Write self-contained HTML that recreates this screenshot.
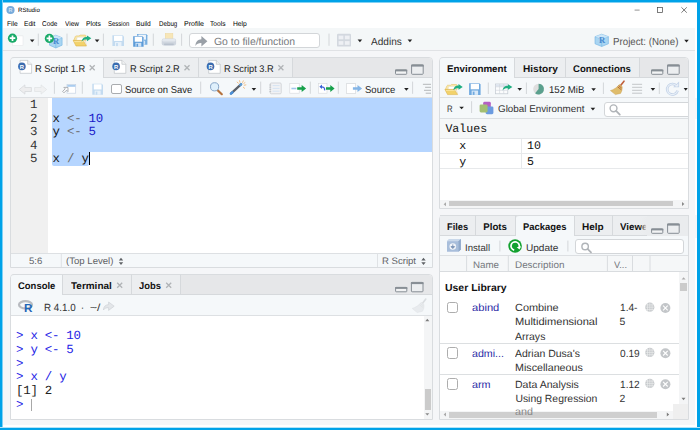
<!DOCTYPE html>
<html>
<head>
<meta charset="utf-8">
<title>RStudio</title>
<style>
html,body{margin:0;padding:0;}
body{width:700px;height:430px;overflow:hidden;background:#fff;font-family:"Liberation Sans",sans-serif;font-size:9.7px;color:#222;}
#win{position:absolute;left:0;top:0;width:700px;height:430px;background:#fff;overflow:hidden;}
.a{position:absolute;box-sizing:border-box;}
.t{position:absolute;white-space:pre;line-height:12px;height:12px;color:#222;transform-origin:0 50%;text-rendering:geometricPrecision;}
.b{font-weight:700;}
.m{font-family:"Liberation Mono",monospace;}
#ico{position:absolute;left:0;top:0;width:700px;height:430px;}
</style>
</head>
<body>
<div id="win">
<div class="a" style="left:0px;top:28.2px;width:700px;height:397px;background:#f5f6f8;"></div>
<div class="a" style="left:3px;top:28.2px;width:692px;height:21.3px;background:#f4f7f8;"></div>
<div class="a" style="left:3px;top:49.5px;width:692px;height:1px;background:#e0e2e5;"></div>
<div class="a" style="left:0px;top:0px;width:700px;height:3px;background:linear-gradient(180deg,#00a2e8 0,#00a2e8 2px,#80d1f4 2px,#80d1f4 3px);"></div>
<div class="a" style="left:0px;top:0px;width:3px;height:430px;background:linear-gradient(90deg,#00a2e8 0,#00a2e8 2px,#80d1f4 2px,#80d1f4 3px);"></div>
<div class="a" style="left:695px;top:3px;width:2px;height:425px;background:#fff;"></div>
<div class="a" style="left:3px;top:425px;width:694px;height:3px;background:#fff;"></div>
<div class="a" style="left:697px;top:0px;width:3px;height:430px;background:#00a2e8;"></div>
<div class="a" style="left:0px;top:427px;width:700px;height:1px;background:#b3e3f8;"></div>
<div class="a" style="left:0px;top:428px;width:700px;height:2px;background:#00a2e8;"></div>
<div class="a" style="left:188.5px;top:32.6px;width:131.5px;height:15.5px;background:#fff;border:1px solid #d3d6d9;border-radius:3px;"></div>
<div class="a" style="left:10px;top:57px;width:423px;height:211px;background:#fff;border:1px solid #d9dcdf;border-radius:4px 4px 0 0;"></div>
<div class="a" style="left:11px;top:58px;width:421px;height:19px;background:#e6e7e9;border-radius:3px 3px 0 0;"></div>
<div class="a" style="left:11px;top:77px;width:421px;height:1px;background:#d6d9dc;"></div>
<div class="a" style="left:104px;top:57px;width:95px;height:21px;background:#eceef0;border-top:1px solid #d9dcdf;border-right:1px solid #d6d9dc;border-bottom:1px solid #d6d9dc;"></div>
<div class="a" style="left:199px;top:57px;width:94px;height:21px;background:#eceef0;border-top:1px solid #d9dcdf;border-right:1px solid #d6d9dc;border-bottom:1px solid #d6d9dc;"></div>
<div class="a" style="left:11px;top:57px;width:93px;height:21px;background:#f5f8fa;border-top:1px solid #d9dcdf;border-right:1px solid #d6d9dc;border-radius:3px 0 0 0;"></div>
<div class="a" style="left:11px;top:78px;width:421px;height:20px;background:#f5f8fa;border-bottom:1px solid #dde0e3;"></div>
<div class="a" style="left:11px;top:98px;width:37px;height:154.5px;background:#f0f0f0;"></div>
<div class="a" style="left:52px;top:98px;width:380px;height:54px;background:#b5d5ff;"></div>
<div class="a" style="left:52px;top:152px;width:37.2px;height:14px;background:#b5d5ff;border-radius:0 0 2px 2px;"></div>
<div class="a" style="left:88.7px;top:152px;width:1.1px;height:13.4px;background:#000;"></div>
<div class="a" style="left:11px;top:252.5px;width:421px;height:14.5px;background:#f5f8fa;border-top:1px solid #dde0e3;"></div>
<div class="a" style="left:111.4px;top:83.7px;width:10.7px;height:10.7px;background:#fff;border:1px solid #a9acaf;border-radius:2px;"></div>
<div class="a" style="left:10px;top:274px;width:423px;height:146px;background:#fff;border:1px solid #d9dcdf;border-radius:4px 4px 0 0;"></div>
<div class="a" style="left:11px;top:275px;width:421px;height:19px;background:#e6e7e9;border-radius:3px 3px 0 0;"></div>
<div class="a" style="left:11px;top:294px;width:421px;height:1px;background:#d6d9dc;"></div>
<div class="a" style="left:63px;top:274px;width:68.5px;height:21px;background:#eceef0;border-top:1px solid #d9dcdf;border-right:1px solid #d6d9dc;border-bottom:1px solid #d6d9dc;"></div>
<div class="a" style="left:131.5px;top:274px;width:49.5px;height:21px;background:#eceef0;border-top:1px solid #d9dcdf;border-right:1px solid #d6d9dc;border-bottom:1px solid #d6d9dc;"></div>
<div class="a" style="left:11px;top:274px;width:52px;height:21px;background:#f5f8fa;border-top:1px solid #d9dcdf;border-right:1px solid #d6d9dc;border-radius:3px 0 0 0;"></div>
<div class="a" style="left:11px;top:295px;width:421px;height:20.5px;background:#f5f8fa;border-bottom:1px solid #dde0e3;"></div>
<div class="a" style="left:31.3px;top:398.8px;width:1px;height:12.4px;background:#a8a8a8;"></div>
<div class="a" style="left:424px;top:316px;width:8px;height:103px;background:#f4f5f6;"></div>
<div class="a" style="left:424.8px;top:389px;width:6.4px;height:21px;background:#cbcbcb;"></div>
<div class="a" style="left:439px;top:57px;width:250px;height:152px;background:#fff;border:1px solid #d9dcdf;border-radius:4px 4px 0 0;"></div>
<div class="a" style="left:440px;top:58px;width:248px;height:19px;background:#e6e7e9;border-radius:3px 3px 0 0;"></div>
<div class="a" style="left:440px;top:77px;width:248px;height:1px;background:#d6d9dc;"></div>
<div class="a" style="left:515px;top:57px;width:50.5px;height:21px;background:#eceef0;border-top:1px solid #d9dcdf;border-right:1px solid #d6d9dc;border-bottom:1px solid #d6d9dc;"></div>
<div class="a" style="left:565.5px;top:57px;width:74px;height:21px;background:#eceef0;border-top:1px solid #d9dcdf;border-right:1px solid #d6d9dc;border-bottom:1px solid #d6d9dc;"></div>
<div class="a" style="left:440px;top:57px;width:75px;height:21px;background:#f5f8fa;border-top:1px solid #d9dcdf;border-right:1px solid #d6d9dc;border-radius:3px 0 0 0;"></div>
<div class="a" style="left:440px;top:78px;width:248px;height:19.5px;background:#f5f8fa;border-bottom:1px solid #dde0e3;"></div>
<div class="a" style="left:440px;top:97.5px;width:248px;height:21px;background:#f5f8fa;border-bottom:1px solid #dde0e3;"></div>
<div class="a" style="left:603.6px;top:101.7px;width:90px;height:15.8px;background:#fff;border:1px solid #d3d6d9;border-radius:3px;"></div>
<div class="a" style="left:689px;top:98px;width:8px;height:21px;background:#f5f6f8;"></div>
<div class="a" style="left:688px;top:98px;width:1px;height:21px;background:#d9dcdf;"></div>
<div class="a" style="left:440px;top:119px;width:248px;height:20px;background:#f5f7f8;border-bottom:1px solid #e4e6e8;"></div>
<div class="a" style="left:440px;top:153px;width:248px;height:1px;background:#e7e9eb;"></div>
<div class="a" style="left:440px;top:168px;width:248px;height:1px;background:#e7e9eb;"></div>
<div class="a" style="left:521px;top:139px;width:1px;height:29px;background:#e7e9eb;"></div>
<div class="a" style="left:440px;top:200px;width:248px;height:8px;background:#f4f5f6;"></div>
<div class="a" style="left:449px;top:201px;width:224px;height:5.4px;background:#cbcbcb;"></div>
<div class="a" style="left:439px;top:215px;width:250px;height:205px;background:#fff;border:1px solid #d9dcdf;border-radius:4px 4px 0 0;"></div>
<div class="a" style="left:440px;top:216px;width:248px;height:19px;background:#e6e7e9;border-radius:3px 3px 0 0;"></div>
<div class="a" style="left:440px;top:235px;width:248px;height:1px;background:#d6d9dc;"></div>
<div class="a" style="left:440px;top:215px;width:36px;height:21px;background:#eceef0;border-top:1px solid #d9dcdf;border-right:1px solid #d6d9dc;border-bottom:1px solid #d6d9dc;"></div>
<div class="a" style="left:476px;top:215px;width:40px;height:21px;background:#eceef0;border-top:1px solid #d9dcdf;border-right:1px solid #d6d9dc;border-bottom:1px solid #d6d9dc;"></div>
<div class="a" style="left:574.5px;top:215px;width:38px;height:21px;background:#eceef0;border-top:1px solid #d9dcdf;border-right:1px solid #d6d9dc;border-bottom:1px solid #d6d9dc;"></div>
<div class="a" style="left:612.5px;top:215px;width:77.5px;height:21px;background:#eceef0;border-top:1px solid #d9dcdf;border-right:1px solid #d6d9dc;border-bottom:1px solid #d6d9dc;"></div>
<div class="a" style="left:516px;top:215px;width:58.5px;height:21px;background:#f5f8fa;border-top:1px solid #d9dcdf;border-right:1px solid #d6d9dc;border-radius:3px 0 0 0;"></div>
<div class="a" style="left:647px;top:216px;width:41px;height:19.5px;background:#eaecee;"></div>
<div class="a" style="left:688px;top:216px;width:1px;height:21px;background:#d9dcdf;"></div>
<div class="a" style="left:689px;top:215px;width:8px;height:23px;background:#f5f6f8;"></div>
<div class="a" style="left:440px;top:236px;width:248px;height:19.5px;background:#f5f8fa;border-bottom:1px solid #dde0e3;"></div>
<div class="a" style="left:574.7px;top:239px;width:109.5px;height:14.5px;background:#fff;border:1px solid #d3d6d9;border-radius:3px;"></div>
<div class="a" style="left:440px;top:255.5px;width:248px;height:16px;background:#f5f7f8;border-bottom:1px solid #d9dcdf;"></div>
<div class="a" style="left:446.5px;top:302px;width:11.4px;height:11.4px;background:#fff;border:1px solid #adadad;border-radius:2.5px;"></div>
<div class="a" style="left:446.5px;top:347.3px;width:11.4px;height:11.4px;background:#fff;border:1px solid #adadad;border-radius:2.5px;"></div>
<div class="a" style="left:446.5px;top:378.3px;width:11.4px;height:11.4px;background:#fff;border:1px solid #adadad;border-radius:2.5px;"></div>
<div class="a" style="left:440px;top:343px;width:239px;height:1px;background:#dcdfe1;"></div>
<div class="a" style="left:440px;top:374px;width:239px;height:1px;background:#dcdfe1;"></div>
<div class="a" style="left:679px;top:272px;width:8.5px;height:132px;background:#f4f5f6;"></div>
<div class="a" style="left:680.4px;top:283px;width:6.4px;height:8.3px;background:#cbcbcb;"></div>
<div class="a" style="left:440px;top:410.8px;width:233px;height:8.2px;background:#f4f5f6;"></div>
<div class="a" style="left:673px;top:403.8px;width:15px;height:15.2px;background:#efefef;"></div>
<div class="a" style="left:449px;top:412px;width:208px;height:5.8px;background:#cbcbcb;opacity:.93;"></div>
<svg id="ico" width="700" height="430" viewBox="0 0 700 430">
<circle cx="10.5" cy="10" r="4.1" fill="#75aadb"/>
<text x="10.5" y="11.9" font-family="Liberation Sans,sans-serif" font-size="5.4" font-weight="700" fill="#cfe2f4" text-anchor="middle">R</text>
<path d="M634.6 10.1h5" stroke="#666" stroke-width=".7"/>
<rect x="657.4" y="7.5" width="5" height="5" fill="none" stroke="#444" stroke-width=".7"/>
<path d="M681.4 7.3l5.4 5.4M686.8 7.3l-5.4 5.4" stroke="#444" stroke-width=".7"/>
<path d="M38.3 33.6V45.8" stroke="#d3d6d9" stroke-width="1"/>
<path d="M67 33.6V45.8" stroke="#d3d6d9" stroke-width="1"/>
<path d="M103.4 33.6V45.8" stroke="#d3d6d9" stroke-width="1"/>
<path d="M153.3 33.6V45.8" stroke="#d3d6d9" stroke-width="1"/>
<path d="M181.6 33.6V45.8" stroke="#d3d6d9" stroke-width="1"/>
<path d="M329 33.6V45.8" stroke="#d3d6d9" stroke-width="1"/>
<path d="M29.90 39.60h4.6l-2.3 2.6z" fill="#222"/>
<path d="M94.80 39.60h4.6l-2.3 2.6z" fill="#222"/>
<path d="M357.60 39.60h4.6l-2.3 2.6z" fill="#222"/>
<path d="M407.60 39.60h4.6l-2.3 2.6z" fill="#222"/>
<path d="M684.20 39.80h4.6l-2.3 2.6z" fill="#222"/>
<path d="M61.3 253.5V267" stroke="#dfe2e5" stroke-width="1"/>
<path d="M377.5 253.5V267" stroke="#dfe2e5" stroke-width="1"/>
<path d="M118.8 260.40000000000003h4.4l-2.2 -2.7zM118.8 262.2h4.4l-2.2 2.7z" fill="#5f6266"/>
<path d="M421.3 260.40000000000003h4.4l-2.2 -2.7zM421.3 262.2h4.4l-2.2 2.7z" fill="#5f6266"/>
<path d="M89.7 65.3l5.0 5.0M94.7 65.3l-5.0 5.0" stroke="#b0b3b6" stroke-width="1.3" fill="none"/>
<path d="M184.5 65.3l5.0 5.0M189.5 65.3l-5.0 5.0" stroke="#b0b3b6" stroke-width="1.3" fill="none"/>
<path d="M278.4 65.3l5.0 5.0M283.4 65.3l-5.0 5.0" stroke="#b0b3b6" stroke-width="1.3" fill="none"/>
<path d="M54.4 81.6V93.8" stroke="#d3d6d9" stroke-width="1"/>
<path d="M82.3 81.6V93.8" stroke="#d3d6d9" stroke-width="1"/>
<path d="M200.7 81.6V93.8" stroke="#d3d6d9" stroke-width="1"/>
<path d="M260.7 81.6V93.8" stroke="#d3d6d9" stroke-width="1"/>
<path d="M310.3 81.6V93.8" stroke="#d3d6d9" stroke-width="1"/>
<path d="M338.3 81.6V93.8" stroke="#d3d6d9" stroke-width="1"/>
<path d="M412.6 81.6V93.8" stroke="#d3d6d9" stroke-width="1"/>
<path d="M251.60 88.10h4.6l-2.3 2.6z" fill="#222"/>
<path d="M404.10 88.10h4.6l-2.3 2.6z" fill="#222"/>
<path d="M117.2 282.7l5.0 5.0M122.2 282.7l-5.0 5.0" stroke="#b0b3b6" stroke-width="1.3" fill="none"/>
<path d="M166.2 282.7l5.0 5.0M171.2 282.7l-5.0 5.0" stroke="#b0b3b6" stroke-width="1.3" fill="none"/>
<path d="M425.3 321.2h4l-2-2.4z" fill="#7c7c7c"/><path d="M425.3 413.2h4l-2 2.4z" fill="#8a8a8a"/>
<path d="M488.3 82.5V94" stroke="#d3d6d9" stroke-width="1"/>
<path d="M526.4 82.5V94" stroke="#d3d6d9" stroke-width="1"/>
<path d="M603.4 82.5V94" stroke="#d3d6d9" stroke-width="1"/>
<path d="M659.3 82.5V94" stroke="#d3d6d9" stroke-width="1"/>
<path d="M517.40 88.10h4.6l-2.3 2.6z" fill="#222"/>
<path d="M591.30 88.30h4.6l-2.3 2.6z" fill="#222"/>
<path d="M650.60 88.10h4.6l-2.3 2.6z" fill="#222"/>
<path d="M683.70 88.10h4l-2.0 2.6z" fill="#222"/>
<path d="M459.30 106.70h4.6l-2.3 2.6z" fill="#222"/>
<path d="M471.6 101.2V113" stroke="#d3d6d9" stroke-width="1"/>
<path d="M590.60 107.80h4.6l-2.3 2.6z" fill="#222"/>
<path d="M446 202.2v4l-2.4-2z" fill="#aaa"/><path d="M682 202v4l2.4-2z" fill="#8a8a8a"/>
<path d="M499.9 240.6V251.5" stroke="#d3d6d9" stroke-width="1"/>
<path d="M567.9 240.6V251.5" stroke="#d3d6d9" stroke-width="1"/>
<path d="M466.6 255.5V271" stroke="#d9dcdf" stroke-width="1"/>
<path d="M508.3 255.5V271" stroke="#d9dcdf" stroke-width="1"/>
<path d="M607.4 255.5V271" stroke="#d9dcdf" stroke-width="1"/>
<path d="M632.5 255.5V271" stroke="#d9dcdf" stroke-width="1"/>
<path d="M650 255.5V271" stroke="#d9dcdf" stroke-width="1"/>
<circle cx="649.8" cy="307.2" r="4.6" fill="#c6c9cc"/><path d="M645.1999999999999 307.2h9.2M649.8 302.59999999999997v9.2M645.8 304.9h8M645.8 309.5h8M647.5 303.2v8M652.0999999999999 303.2v8" stroke="#eceeef" stroke-width=".6" fill="none"/>
<circle cx="665.4" cy="308.0" r="5" fill="#c3c6c9"/><path d="M663.1 305.7l4.6 4.6M667.6999999999999 305.7l-4.6 4.6" stroke="#fff" stroke-width="1.1"/>
<circle cx="649.8" cy="352.4" r="4.6" fill="#c6c9cc"/><path d="M645.1999999999999 352.4h9.2M649.8 347.79999999999995v9.2M645.8 350.09999999999997h8M645.8 354.7h8M647.5 348.4v8M652.0999999999999 348.4v8" stroke="#eceeef" stroke-width=".6" fill="none"/>
<circle cx="665.4" cy="353.2" r="5" fill="#c3c6c9"/><path d="M663.1 350.9l4.6 4.6M667.6999999999999 350.9l-4.6 4.6" stroke="#fff" stroke-width="1.1"/>
<circle cx="649.8" cy="383.4" r="4.6" fill="#c6c9cc"/><path d="M645.1999999999999 383.4h9.2M649.8 378.79999999999995v9.2M645.8 381.09999999999997h8M645.8 385.7h8M647.5 379.4v8M652.0999999999999 379.4v8" stroke="#eceeef" stroke-width=".6" fill="none"/>
<circle cx="665.4" cy="384.2" r="5" fill="#c3c6c9"/><path d="M663.1 381.9l4.6 4.6M667.6999999999999 381.9l-4.6 4.6" stroke="#fff" stroke-width="1.1"/>
<path d="M681.6 279.6h4l-2-2.4z" fill="#aaa"/><path d="M681.5 397.8h4l-2 2.4z" fill="#7c7c7c"/>
<path d="M446 412.5v4l-2.4-2z" fill="#aaa"/><path d="M666.8 412.5v4l2.4-2z" fill="#7c7c7c"/>
<rect x="12.3" y="35.9" width="10.7" height="9.8" fill="#fff" stroke="#e0e2e5" stroke-width=".5"/>
<circle cx="12.5" cy="38.2" r="4.6" fill="#18aa68"/><path d="M9.7 38.2h5.6M12.5 35.400000000000006v5.6" stroke="#fff" stroke-width="1.7"/>
<path d="M55.8 35.2L62.1 37.760000000000005V45.184000000000005L55.8 48.0L49.5 45.184000000000005V37.760000000000005z" fill="#a9d5f2" stroke="#6fb2e2" stroke-width=".6"/><path d="M49.5 37.760000000000005L55.8 40.32000000000001L62.1 37.760000000000005M55.8 40.32000000000001V48.0" stroke="#6fb2e2" stroke-width=".5" fill="none"/><path d="M55.8 35.2L62.1 37.760000000000005L55.8 40.32000000000001L49.5 37.760000000000005z" fill="#d3eafa" opacity=".8"/><text x="56.099999999999994" y="44.416000000000004" font-family="Liberation Serif,serif" font-size="8.4" font-weight="700" fill="#4a8bd0" text-anchor="middle">R</text>
<circle cx="49.4" cy="38.4" r="4.6" fill="#18aa68"/><path d="M46.6 38.4h5.6M49.4 35.6v5.6" stroke="#fff" stroke-width="1.7"/>
<g transform="translate(73.2 35) scale(1.000 1.000)"><path d="M0.4 5.6L2.2 1.4Q2.5 .9 3.1 .9H5.9L6.8 .1H11.9Q12.6 .1 12.6 .8V5.6z" fill="#f8e7ab" stroke="#e3bd57" stroke-width=".55"/><path d="M3.2 5.6L4.2 2.3H11.2V5.6z" fill="#fff" stroke="#d4d4d4" stroke-width=".35"/><path d="M0 5.4H9.9L13.3 11H2.8z" fill="#f2d26b" stroke="#dcae3c" stroke-width=".55" stroke-linejoin="round"/><path d="M1 6.6H10.3" stroke="#f9e6a4" stroke-width=".9"/><path d="M11 2.6L13.4 10.6" stroke="#e8cf9a" stroke-width=".5"/></g>
<path d="M81.6 41.8C82.1 38.099999999999994 84.1 37.0 86.935 37.0V35.4L91.3 38.3L86.935 41.199999999999996V39.599999999999994C84.6 39.5 83.1 39.8 81.6 41.8z" fill="#1fae80"/>
<g opacity="1"><path d="M112.4 35.2h10.4l1.2 1.2v9.700000000000001h-11.6z" fill="#c3dbf0"/><rect x="114.024" y="35.800000000000004" width="8.352" height="5.123" fill="#fff"/><rect x="114.95200000000001" y="42.067" width="6.496" height="4.033" fill="#e9f2fa"/><rect x="116.11200000000001" y="43.048" width="1.74" height="3.0520000000000005" fill="#c3dbf0"/></g>
<g opacity="1"><path d="M137 34h9.200000000000001l1.2 1.2v9.5h-10.4z" fill="#78afe0"/><rect x="138.456" y="34.6" width="7.4879999999999995" height="5.028999999999999" fill="#eef5fc"/><rect x="139.288" y="40.741" width="5.824000000000001" height="3.9589999999999996" fill="#cfe3f6"/><rect x="140.328" y="41.704" width="1.56" height="2.996" fill="#78afe0"/></g>
<rect x="132.8" y="35.8" width="11.2" height="11.2" fill="#f4f5f7"/>
<g opacity="1"><path d="M133.2 36.2h9.200000000000001l1.2 1.2v9.3h-10.4z" fill="#5b9bd8"/><rect x="134.65599999999998" y="36.800000000000004" width="7.4879999999999995" height="4.935" fill="#fff"/><rect x="135.488" y="42.815000000000005" width="5.824000000000001" height="3.885" fill="#cfe3f6"/><rect x="136.528" y="43.760000000000005" width="1.56" height="2.9400000000000004" fill="#5b9bd8"/></g>
<rect x="165.2" y="33.4" width="7.7" height="6.6" fill="#f7e6b8" stroke="#ecd395" stroke-width=".4"/><rect x="161.7" y="38.6" width="14.4" height="7" rx="2" fill="#cfd6df"/><rect x="162.3" y="38.9" width="13.2" height="2.6" rx="1.2" fill="#e3e8ee"/><rect x="164" y="43.6" width="9.8" height="1.6" rx=".6" fill="#b9c2ce"/>
<path d="M195.4 46c0.2 -4.6 2.6 -6.6 6 -6.8v-3.2l6 5.2l-6 5.2v-3.3c-2.6 -0.1 -4.6 0.6 -6 2.9z" fill="#9aa0a7"/>
<rect x="337" y="33.8" width="14" height="12.8" rx="1.2" fill="#d3d8df"/><rect x="338.6" y="35.6" width="4.8" height="3.7" fill="#eef0f4"/><rect x="344.8" y="35.6" width="4.8" height="3.7" fill="#eef0f4"/><rect x="338.6" y="41.1" width="4.8" height="3.7" fill="#eef0f4"/><rect x="344.8" y="41.1" width="4.8" height="3.7" fill="#eef0f4"/>
<path d="M601.7 34.2L608.4 36.660000000000004V43.794000000000004L601.7 46.5L595 43.794000000000004V36.660000000000004z" fill="#a9d5f2" stroke="#6fb2e2" stroke-width=".6"/><path d="M595 36.660000000000004L601.7 39.120000000000005L608.4 36.660000000000004M601.7 39.120000000000005V46.5" stroke="#6fb2e2" stroke-width=".5" fill="none"/><path d="M601.7 34.2L608.4 36.660000000000004L601.7 39.120000000000005L595 36.660000000000004z" fill="#d3eafa" opacity=".8"/><text x="602.0" y="43.056000000000004" font-family="Liberation Serif,serif" font-size="8.6" font-weight="700" fill="#4a8bd0" text-anchor="middle">R</text>
<path d="M20.1 60.4h7.6l3.9 3.9v9h-11.5z" fill="#fff" stroke="#b4b8bd" stroke-width=".6"/><path d="M27.700000000000003 60.4v3.9h3.9" fill="#f1f2f3" stroke="#b4b8bd" stroke-width=".6"/><circle cx="21.900000000000002" cy="66.4" r="3.8" fill="#3b6cb0"/><text x="21.900000000000002" y="68.5" font-family="Liberation Sans,sans-serif" font-size="5.8" font-weight="700" fill="#fff" text-anchor="middle">R</text>
<path d="M114.3 60.4h7.6l3.9 3.9v9h-11.5z" fill="#fff" stroke="#b4b8bd" stroke-width=".6"/><path d="M121.89999999999999 60.4v3.9h3.9" fill="#f1f2f3" stroke="#b4b8bd" stroke-width=".6"/><circle cx="116.1" cy="66.4" r="3.8" fill="#3b6cb0"/><text x="116.1" y="68.5" font-family="Liberation Sans,sans-serif" font-size="5.8" font-weight="700" fill="#fff" text-anchor="middle">R</text>
<path d="M208.7 60.4h7.6l3.9 3.9v9h-11.5z" fill="#fff" stroke="#b4b8bd" stroke-width=".6"/><path d="M216.29999999999998 60.4v3.9h3.9" fill="#f1f2f3" stroke="#b4b8bd" stroke-width=".6"/><circle cx="210.5" cy="66.4" r="3.8" fill="#3b6cb0"/><text x="210.5" y="68.5" font-family="Liberation Sans,sans-serif" font-size="5.8" font-weight="700" fill="#fff" text-anchor="middle">R</text>
<rect x="395.5" y="69.89999999999999" width="11.2" height="4.4" rx=".6" fill="#f2f3f4" stroke="#878e95" stroke-width="1"/><path d="M395 70.5h12.2" stroke="#878e95" stroke-width="1.8"/>
<rect x="411.6" y="64.89999999999999" width="11.6" height="9.4" rx=".8" fill="#eceef0" stroke="#878e95" stroke-width="1"/><path d="M411.1 65.6h12.6" stroke="#878e95" stroke-width="2"/>
<path d="M19.3 89.5l5.6 -4.6v2.6h6.5v4h-6.5v2.6z" fill="#ededee" stroke="#d3d5d8" stroke-width=".7" stroke-linejoin="round"/>
<path d="M46.7 89.5l-5.6 -4.6v2.6h-6.5v4h6.5v2.6z" fill="#f0f1f2" stroke="#e0e2e4" stroke-width=".7" stroke-linejoin="round"/>
<rect x="67" y="84.6" width="8.7" height="8.6" fill="#fff" stroke="#c6d3e3" stroke-width=".7"/><rect x="67.3" y="84.9" width="8.1" height="1.9" fill="#aacdf0"/><path d="M62.6 91.4l2.6 -2.6l-1.4 -1.4h4.2v4.2l-1.4 -1.4l-2.6 2.6z" fill="#fbfbfc" stroke="#90959b" stroke-width=".7" stroke-linejoin="round"/>
<g opacity="1"><path d="M92.3 83.7h9.5l1.2 1.2v9.8h-10.7z" fill="#c3dbf0"/><rect x="93.798" y="84.3" width="7.703999999999999" height="5.17" fill="#fff"/><rect x="94.654" y="90.63" width="5.992" height="4.07" fill="#e9f2fa"/><rect x="95.724" y="91.62" width="1.6049999999999998" height="3.08" fill="#c3dbf0"/></g>
<path d="M217.4 90l4.4 4.2" stroke="#b5723d" stroke-width="2.2" stroke-linecap="round"/><circle cx="214.6" cy="86.8" r="4.1" fill="#dff0fc" stroke="#86a5c8" stroke-width="1"/>
<path d="M231.2 93.4L241 84.4" stroke="#5b6068" stroke-width="2.3" stroke-linecap="round"/><path d="M230.9 93.7l1.5 -1.4" stroke="#4a90d9" stroke-width="2.5" stroke-linecap="round"/><path d="M240.3 85l.9 -.8" stroke="#5b9bd5" stroke-width="2.4" stroke-linecap="round"/><path d="M237.1 82.1l1.3 1.1M239.5 80.7l.5 1.6M243.3 80.8l-.7 1.6M244.2 85.2l1.7 -.3M243.3 87.2l1.3 1.1M245 82.6l-1.2 .8" stroke="#f0b878" stroke-width=".9" stroke-linecap="round"/>
<rect x="270.2" y="83" width="11" height="10.8" rx="1" fill="#f1f2f4" stroke="#c6c9cd" stroke-width=".7"/><path d="M272.6 85.6h7M272.6 88.4h7M272.6 91.2h7" stroke="#d5e4f3" stroke-width="1"/><path d="M269.4 85h1.8M269.4 87.2h1.8M269.4 89.4h1.8M269.4 91.6h1.8" stroke="#b0b4b9" stroke-width=".7"/>
<rect x="289.8" y="83.4" width="9.4" height="9.8" fill="#fff" stroke="#d5d8db" stroke-width=".6"/><path d="M291.4 88.5h5" stroke="#a2c7ec" stroke-width="1.6"/>
<path d="M297.2 87.2H301.65V85.05L306.1 88.5L301.65 91.95V89.8H297.2z" fill="#16a04a"/>
<rect x="318.4" y="83.4" width="8.6" height="9.8" fill="#fff" stroke="#d5d8db" stroke-width=".6"/><path d="M324.6 90.4c0.4 -2.6 -1 -3.6 -3.2 -3.6" stroke="#3a60d8" stroke-width="1.3" fill="none"/><path d="M322 84.6v4.4l-2.6 -2.2z" fill="#3a60d8"/>
<path d="M326 87.2H330.3V85.05L334.6 88.5L330.3 91.95V89.8H326z" fill="#16a04a"/>
<rect x="346.5" y="83.7" width="9.2" height="9.8" fill="#fff" stroke="#d0d3d6" stroke-width=".6"/>
<path d="M352.9 87.2H357.5V85.0L362.1 88.5L357.5 92.0V89.8H352.9z" fill="#84b5e6"/>
<path d="M422.9 84.3H431M425.09999999999997 87.3H431M424.0 90.3H431M425.7 93.2H431" stroke="#b4b7ba" stroke-width="1" fill="none"/>
<rect x="395.6" y="287.40000000000003" width="11.2" height="4.4" rx=".6" fill="#f2f3f4" stroke="#878e95" stroke-width="1"/><path d="M395.1 288.0h12.2" stroke="#878e95" stroke-width="1.8"/>
<rect x="411.4" y="282.40000000000003" width="11.6" height="9.4" rx=".8" fill="#eceef0" stroke="#878e95" stroke-width="1"/><path d="M410.9 283.1h12.6" stroke="#878e95" stroke-width="2"/>
<ellipse cx="25.5" cy="304.8" rx="6.5" ry="3.6" fill="none" stroke="#b8bbc0" stroke-width="2.2"/><text x="28.2" y="311.5" font-family="Liberation Sans,sans-serif" font-size="11.7" font-weight="700" fill="#1f65b7" text-anchor="middle">R</text>
<path d="M103.4 310c0.2 -3.6 2.2 -5.2 5.2 -5.4v-2.6l5.6 4.2l-5.6 4.2v-2.7c-2.2 -0.1 -4 0.5 -5.2 2.3z" fill="#e3e6e9" stroke="#c9cdd1" stroke-width=".6"/>
<g opacity="0.6" transform="translate(412.5 298.6)"><path d="M13.3 0.5L9.9 4.9" stroke="#c9cdd1" stroke-width="1.6" stroke-linecap="round"/><path d="M8.7 3.7L11.5 5.9C11.7 8.8 10.9 11.3 9.9 12.7L4.7 13.9L-0.3 9.9C2.9 8.9 6.7 6.7 8.7 3.7z" fill="#e1e4e7" stroke="#c9cdd1" stroke-width=".4"/><path d="M7.9 4.9l3 2.4M6.9 6.1l3.8 3" stroke="#d2d5d8" stroke-width=".8"/></g>
<rect x="651.6" y="69.89999999999999" width="11.2" height="4.4" rx=".6" fill="#f2f3f4" stroke="#878e95" stroke-width="1"/><path d="M651.1 70.5h12.2" stroke="#878e95" stroke-width="1.8"/>
<rect x="667.6" y="64.89999999999999" width="11.6" height="9.4" rx=".8" fill="#eceef0" stroke="#878e95" stroke-width="1"/><path d="M667.1 65.6h12.6" stroke="#878e95" stroke-width="2"/>
<g transform="translate(444.9 84.4) scale(0.956 0.927)"><path d="M0.4 5.6L2.2 1.4Q2.5 .9 3.1 .9H5.9L6.8 .1H11.9Q12.6 .1 12.6 .8V5.6z" fill="#f8e7ab" stroke="#e3bd57" stroke-width=".55"/><path d="M3.2 5.6L4.2 2.3H11.2V5.6z" fill="#fff" stroke="#d4d4d4" stroke-width=".35"/><path d="M0 5.4H9.9L13.3 11H2.8z" fill="#f2d26b" stroke="#dcae3c" stroke-width=".55" stroke-linejoin="round"/><path d="M1 6.6H10.3" stroke="#f9e6a4" stroke-width=".9"/><path d="M11 2.6L13.4 10.6" stroke="#e8cf9a" stroke-width=".5"/></g>
<path d="M453.4 90.3C453.9 86.7 455.9 85.60000000000001 458.515 85.60000000000001V84.10000000000001L462.7 86.9L458.515 89.7V88.2C456.4 88.10000000000001 454.9 88.4 453.4 90.3z" fill="#1fae80"/>
<g opacity="1"><path d="M469.1 83.2h10.3l1.2 1.2v10.5h-11.5z" fill="#70a9df"/><rect x="470.71000000000004" y="83.8" width="8.28" height="5.499" fill="#fff"/><rect x="471.63" y="90.571" width="6.44" height="4.329" fill="#d9e9f8"/><rect x="472.78000000000003" y="91.624" width="1.7249999999999999" height="3.2760000000000002" fill="#70a9df"/></g>
<rect x="495.6" y="84" width="12.2" height="9.8" fill="#fbfcfd" stroke="#c2c8d0" stroke-width=".7"/><rect x="496" y="84.4" width="11.4" height="2.2" fill="#dde5f0"/><path d="M495.6 86.8h12.2M495.6 90.3h12.2M499.6 84v9.8M503.7 84v9.8" stroke="#cfd4da" stroke-width=".6"/>
<path d="M502.6 90.39999999999999C503.1 86.8 505.1 85.7 507.99 85.7V84.2L512.4 87L507.99 89.8V88.3C505.6 88.2 504.1 88.5 502.6 90.39999999999999z" fill="#1fae80"/>
<circle cx="538.6" cy="89.1" r="5.4" fill="#dedede"/><path d="M538.6 89.1V83.7A5.4 5.4 0 1 1 535.1 93.2z" fill="#5aa08e"/>
<g opacity="1" transform="translate(610.7 80.7)"><path d="M13.3 0.5L9.9 4.9" stroke="#c0603c" stroke-width="1.6" stroke-linecap="round"/><path d="M8.7 3.7L11.5 5.9C11.7 8.8 10.9 11.3 9.9 12.7L4.7 13.9L-0.3 9.9C2.9 8.9 6.7 6.7 8.7 3.7z" fill="#e0bd6c" stroke="#c49a4a" stroke-width=".4"/><path d="M7.9 4.9l3 2.4M6.9 6.1l3.8 3" stroke="#a8552e" stroke-width=".8"/></g>
<path d="M632.1 84.3H642.1M632.1 87.3H642.1M632.1 90.3H642.1M632.1 93.2H642.1" stroke="#c3c6c9" stroke-width="1" fill="none"/>
<path d="M676.8 86.2A5.3 5.3 0 1 0 677.6 90.6" fill="none" stroke="#c3d2e7" stroke-width="2.6"/><path d="M679.1 81.4v5.9h-5.9z" fill="#c3d2e7"/><path d="M676.8 86.2A5.3 5.3 0 1 0 677.6 90.6" fill="none" stroke="#e9f0f8" stroke-width="1.1"/><path d="M678.3 83.3v3.2h-3.2z" fill="#e9f0f8"/>
<rect x="483.2" y="101.8" width="7.6" height="7.6" rx="1.4" fill="#b45fc4"/><rect x="485.6" y="106.4" width="7.8" height="7.8" rx="1.4" fill="#6b9be0"/><rect x="479.6" y="104.4" width="8" height="8" rx="1.4" fill="#a3bf72"/>
<circle cx="613.532" cy="108.33200000000001" r="3.4320000000000004" fill="none" stroke="#b0b4b8" stroke-width="1.4"/><path d="M616.106 110.906L619.8 114.60000000000001" stroke="#b0b4b8" stroke-width="1.7999999999999998" stroke-linecap="round"/>
<rect x="651.6" y="228.9" width="11.2" height="4.4" rx=".6" fill="#f2f3f4" stroke="#878e95" stroke-width="1"/><path d="M651.1 229.5h12.2" stroke="#878e95" stroke-width="1.8"/>
<rect x="667.6" y="223.9" width="11.6" height="9.4" rx=".8" fill="#eceef0" stroke="#878e95" stroke-width="1"/><path d="M667.1 224.60000000000002h12.6" stroke="#878e95" stroke-width="2"/>
<path d="M447 241.2l2.2 -2.2h11.6v10.6l-2.2 2.2h-11.6z" fill="#a8bedb"/><path d="M447 241.2l2.2 -2.2h11.6l-2.2 2.2z" fill="#c9d8ea"/><path d="M458.6 241.2l2.2 -2.2v10.6l-2.2 2.2z" fill="#8ea8ca"/><circle cx="452.8" cy="246.5" r="3.3" fill="#f2f5f9"/><path d="M452.8 244.4v2.6M451 246.6l1.8 1.9l1.8 -1.9z" stroke="#7a93b6" stroke-width=".9" fill="#7a93b6"/>
<circle cx="515.1" cy="246" r="6.8" fill="#12a12f"/><path d="M519.2 247.2A4.2 4.2 0 1 0 514.2 250.1" fill="none" stroke="#fff" stroke-width="1.7"/><path d="M521.2 246.2l-1.7 3.4l-2.8 -2.4z" fill="#fff"/>
<circle cx="585.1340000000001" cy="246.534" r="3.2340000000000004" fill="none" stroke="#b0b4b8" stroke-width="1.4"/><path d="M587.5595000000002 248.9595L591.0 252.4" stroke="#b0b4b8" stroke-width="1.7999999999999998" stroke-linecap="round"/>
</svg>
<div class="t" style="left:17.50px;top:4.97px;font-size:6.2px;transform:scaleX(0.9902);color:#000;">RStudio</div>
<div class="t" style="left:6.50px;top:18.98px;font-size:7px;transform:scaleX(0.9573);color:#000;">File</div>
<div class="t" style="left:23.70px;top:18.98px;font-size:7px;transform:scaleX(0.9451);color:#000;">Edit</div>
<div class="t" style="left:42.20px;top:18.98px;font-size:7px;transform:scaleX(0.9203);color:#000;">Code</div>
<div class="t" style="left:64.90px;top:18.98px;font-size:7px;transform:scaleX(0.9238);color:#000;">View</div>
<div class="t" style="left:86.00px;top:18.98px;font-size:7px;transform:scaleX(0.9510);color:#000;">Plots</div>
<div class="t" style="left:107.50px;top:18.98px;font-size:7px;transform:scaleX(0.8552);color:#000;">Session</div>
<div class="t" style="left:136.00px;top:18.98px;font-size:7px;transform:scaleX(0.9501);color:#000;">Build</div>
<div class="t" style="left:158.50px;top:18.98px;font-size:7px;transform:scaleX(0.8866);color:#000;">Debug</div>
<div class="t" style="left:184.30px;top:18.98px;font-size:7px;transform:scaleX(1.0079);color:#000;">Profile</div>
<div class="t" style="left:210.30px;top:18.98px;font-size:7px;transform:scaleX(0.9484);color:#000;">Tools</div>
<div class="t" style="left:232.50px;top:18.98px;font-size:7px;transform:scaleX(0.9579);color:#000;">Help</div>
<div class="t" style="left:214.20px;top:35.98px;font-size:10.5px;transform:scaleX(0.9924);color:#777a7e;">Go to file/function</div>
<div class="t" style="left:370.50px;top:36.98px;font-size:10.3px;transform:scaleX(0.9783);color:#333;">Addins</div>
<div class="t" style="left:613.20px;top:36.98px;font-size:10.3px;transform:scaleX(0.9444);color:#555;">Project: (None)</div>
<div class="t" style="left:28.90px;top:254.97px;font-size:9.4px;transform:scaleX(1.0194);color:#5f6266;">5:6</div>
<div class="t" style="left:66.30px;top:254.97px;font-size:9.4px;transform:scaleX(1.0221);color:#5f6266;">(Top Level)</div>
<div class="t" style="left:382.10px;top:254.97px;font-size:9.4px;transform:scaleX(1.0197);color:#5f6266;">R Script</div>
<div class="t" style="left:35.20px;top:63.98px;font-size:9.8px;transform:scaleX(0.9486);">R Script 1.R</div>
<div class="t" style="left:130.00px;top:63.98px;font-size:9.8px;transform:scaleX(0.9430);">R Script 2.R</div>
<div class="t" style="left:224.20px;top:63.98px;font-size:9.8px;transform:scaleX(0.9411);">R Script 3.R</div>
<div class="t" style="left:125.30px;top:84.97px;font-size:10px;transform:scaleX(0.9442);">Source on Save</div>
<div class="t" style="left:364.50px;top:84.97px;font-size:10px;transform:scaleX(0.9531);">Source</div>
<div class="t m" style="left:30.00px;top:98.97px;font-size:12.4px;color:#333;">1</div>
<div class="t m" style="left:30.00px;top:112.97px;font-size:12.4px;color:#333;">2</div>
<div class="t m" style="left:30.00px;top:125.97px;font-size:12.4px;color:#333;">3</div>
<div class="t m" style="left:30.00px;top:139.97px;font-size:12.4px;color:#333;">4</div>
<div class="t m" style="left:30.00px;top:152.97px;font-size:12.4px;color:#333;">5</div>
<div class="t m" style="left:52.60px;top:112.97px;font-size:12.4px;color:#111;letter-spacing:-0.24px;">x </div>
<div class="t m" style="left:67.00px;top:112.97px;font-size:12.4px;color:#6b6b6b;letter-spacing:-0.24px;">&lt;-</div>
<div class="t m" style="left:88.60px;top:112.97px;font-size:12.4px;color:#1818c8;letter-spacing:-0.24px;">10</div>
<div class="t m" style="left:52.60px;top:125.97px;font-size:12.4px;color:#111;letter-spacing:-0.24px;">y </div>
<div class="t m" style="left:67.00px;top:125.97px;font-size:12.4px;color:#6b6b6b;letter-spacing:-0.24px;">&lt;-</div>
<div class="t m" style="left:88.60px;top:125.97px;font-size:12.4px;color:#1818c8;letter-spacing:-0.24px;">5</div>
<div class="t m" style="left:52.60px;top:152.97px;font-size:12.4px;color:#111;letter-spacing:-0.24px;">x </div>
<div class="t m" style="left:67.00px;top:152.97px;font-size:12.4px;color:#6b6b6b;letter-spacing:-0.24px;">/</div>
<div class="t m" style="left:74.20px;top:152.97px;font-size:12.4px;color:#111;letter-spacing:-0.24px;"> y</div>
<div class="t b" style="left:17.70px;top:280.98px;font-size:9.7px;transform:scaleX(0.9760);color:#111;">Console</div>
<div class="t b" style="left:70.80px;top:280.98px;font-size:9.7px;transform:scaleX(1.0284);color:#111;">Terminal</div>
<div class="t b" style="left:139.20px;top:280.98px;font-size:9.7px;transform:scaleX(0.9680);color:#111;">Jobs</div>
<div class="t" style="left:44.00px;top:302.98px;font-size:10.4px;transform:scaleX(0.9458);color:#333;">R 4.1.0</div>
<div class="t" style="left:80.70px;top:302.98px;font-size:10.4px;color:#333;">·</div>
<div class="t" style="left:89.50px;top:302.98px;font-size:10.4px;transform:scaleX(1.1596);color:#333;">~/</div>
<div class="t m" style="left:16.00px;top:329.98px;font-size:12.4px;color:#2323e6;letter-spacing:-0.24px;">&gt; x &lt;- 10</div>
<div class="t m" style="left:16.00px;top:343.98px;font-size:12.4px;color:#2323e6;letter-spacing:-0.24px;">&gt; y &lt;- 5</div>
<div class="t m" style="left:16.00px;top:357.98px;font-size:12.4px;color:#2323e6;letter-spacing:-0.24px;">&gt;</div>
<div class="t m" style="left:16.00px;top:370.98px;font-size:12.4px;color:#2323e6;letter-spacing:-0.24px;">&gt; x / y</div>
<div class="t m" style="left:16.00px;top:384.98px;font-size:12.4px;letter-spacing:-0.24px;">[1] 2</div>
<div class="t m" style="left:16.00px;top:398.98px;font-size:12.4px;color:#2323e6;letter-spacing:-0.24px;">&gt;</div>
<div class="t b" style="left:447.30px;top:63.98px;font-size:9.7px;transform:scaleX(1.0098);color:#111;">Environment</div>
<div class="t b" style="left:522.50px;top:63.98px;font-size:9.7px;transform:scaleX(1.0422);color:#111;">History</div>
<div class="t b" style="left:573.30px;top:63.98px;font-size:9.7px;transform:scaleX(0.9868);color:#111;">Connections</div>
<div class="t" style="left:549.20px;top:84.97px;font-size:10px;transform:scaleX(0.9649);">152 MiB</div>
<div class="t" style="left:447.10px;top:102.97px;font-size:9.4px;transform:scaleX(0.8258);color:#333;">R</div>
<div class="t" style="left:497.50px;top:103.97px;font-size:9.8px;transform:scaleX(1.0041);color:#333;">Global Environment</div>
<div class="t m" style="left:445.40px;top:123.97px;font-size:11.6px;color:#111;">Values</div>
<div class="t m" style="left:459.30px;top:140.97px;font-size:11.6px;color:#111;">x</div>
<div class="t m" style="left:527.00px;top:140.97px;font-size:11.6px;color:#111;">10</div>
<div class="t m" style="left:459.30px;top:156.97px;font-size:11.6px;color:#111;">y</div>
<div class="t m" style="left:527.00px;top:156.97px;font-size:11.6px;color:#111;">5</div>
<div class="t b" style="left:446.80px;top:221.97px;font-size:9.7px;transform:scaleX(0.9557);color:#111;">Files</div>
<div class="t b" style="left:483.30px;top:221.97px;font-size:9.7px;color:#111;">Plots</div>
<div class="t b" style="left:522.90px;top:221.97px;font-size:9.7px;transform:scaleX(0.9727);color:#111;">Packages</div>
<div class="t b" style="left:582.40px;top:221.97px;font-size:9.7px;transform:scaleX(1.0333);color:#111;">Help</div>
<div class="t b" style="left:620.00px;top:221.97px;font-size:9.7px;transform:scaleX(1.0076);color:#111;width:26.3px;overflow:hidden;">Viewer</div>
<div class="t" style="left:465.20px;top:242.97px;font-size:9.7px;transform:scaleX(0.9916);color:#333;">Install</div>
<div class="t" style="left:526.20px;top:242.97px;font-size:9.7px;transform:scaleX(1.0368);color:#333;">Update</div>
<div class="t" style="left:472.60px;top:259.98px;font-size:9.6px;transform:scaleX(1.0159);color:#74787d;">Name</div>
<div class="t" style="left:514.50px;top:259.98px;font-size:9.6px;transform:scaleX(1.0292);color:#74787d;">Description</div>
<div class="t" style="left:613.80px;top:259.98px;font-size:9.6px;transform:scaleX(0.9618);color:#74787d;">V...</div>
<div class="t b" style="left:445.40px;top:282.98px;font-size:10.2px;transform:scaleX(1.0261);color:#111;">User Library</div>
<div class="t" style="left:472.20px;top:302.98px;font-size:10.4px;transform:scaleX(1.0732);color:#2b2ba6;">abind</div>
<div class="t" style="left:515.40px;top:302.98px;font-size:10.4px;transform:scaleX(1.0506);color:#333;">Combine</div>
<div class="t" style="left:515.40px;top:316.98px;font-size:10.4px;transform:scaleX(1.0660);color:#333;">Multidimensional</div>
<div class="t" style="left:515.40px;top:331.98px;font-size:10.4px;transform:scaleX(1.0123);color:#333;">Arrays</div>
<div class="t" style="left:619.50px;top:302.98px;font-size:10.4px;transform:scaleX(0.9773);color:#333;">1.4-</div>
<div class="t" style="left:619.50px;top:316.98px;font-size:10.4px;color:#333;">5</div>
<div class="t" style="left:472.20px;top:348.98px;font-size:10.4px;transform:scaleX(1.0261);color:#2b2ba6;">admi...</div>
<div class="t" style="left:515.40px;top:348.98px;font-size:10.4px;transform:scaleX(1.0084);color:#333;">Adrian Dusa's</div>
<div class="t" style="left:515.40px;top:362.98px;font-size:10.4px;transform:scaleX(1.0297);color:#333;">Miscellaneous</div>
<div class="t" style="left:619.50px;top:348.98px;font-size:10.4px;transform:scaleX(0.9736);color:#333;">0.19</div>
<div class="t" style="left:472.20px;top:379.98px;font-size:10.4px;transform:scaleX(1.0387);color:#2b2ba6;">arm</div>
<div class="t" style="left:515.40px;top:379.98px;font-size:10.4px;transform:scaleX(1.0150);color:#333;">Data Analysis</div>
<div class="t" style="left:515.40px;top:393.98px;font-size:10.4px;color:#333;">Using Regression</div>
<div class="t" style="left:515.40px;top:406.98px;font-size:10.4px;transform:scaleX(1.0321);color:#8a8a8a;">and</div>
<div class="t" style="left:619.50px;top:379.98px;font-size:10.4px;transform:scaleX(0.9736);color:#333;">1.12</div>
<div class="t" style="left:619.50px;top:393.98px;font-size:10.4px;color:#333;">2</div>
<div class="a" style="left:640px;top:217px;width:7px;height:18px;background:linear-gradient(90deg,rgba(234,236,238,0),#eaecee);"></div>
<div class="a" style="left:647px;top:217px;width:3px;height:18px;background:#eaecee;"></div>
</div>
</body>
</html>
